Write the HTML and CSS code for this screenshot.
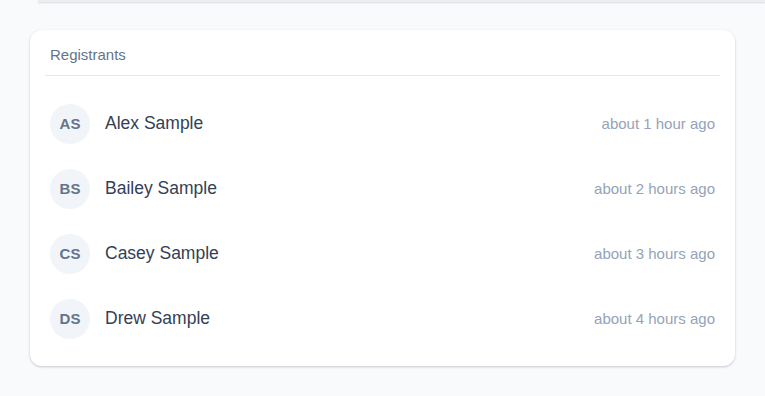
FILE: index.html
```html
<!DOCTYPE html>
<html lang="en">
<head>
<meta charset="utf-8">
<title>Registrants</title>
<link rel="stylesheet" href="styles.css">
</head>
<body>
<div class="top-edge"></div>
<section class="card">
  <header class="card-header">Registrants</header>
  <ul class="list">
    <li class="row">
      <span class="avatar">AS</span>
      <span class="name">Alex Sample</span>
      <span class="time">about 1 hour ago</span>
    </li>
    <li class="row">
      <span class="avatar">BS</span>
      <span class="name">Bailey Sample</span>
      <span class="time">about 2 hours ago</span>
    </li>
    <li class="row">
      <span class="avatar">CS</span>
      <span class="name">Casey Sample</span>
      <span class="time">about 3 hours ago</span>
    </li>
    <li class="row">
      <span class="avatar">DS</span>
      <span class="name">Drew Sample</span>
      <span class="time">about 4 hours ago</span>
    </li>
  </ul>
</section>
</body>
</html>
```
FILE: styles.css
```css
html, body {
  margin: 0;
  padding: 0;
  background: #f8fafc;
  font-family: "Liberation Sans", Arial, sans-serif;
}
body {
  width: 765px;
  height: 396px;
  overflow: hidden;
}
.top-edge {
  margin-left: 38px;
  height: 2px;
  background: #eceef1;
  box-shadow: 0 1px 2px rgba(15, 23, 42, 0.14);
}
.card {
  margin: 28px 0 0 30px;
  width: 705px;
  height: 336px;
  box-sizing: border-box;
  background: #ffffff;
  border-radius: 12px;
  box-shadow: 0 1px 3px rgba(15, 23, 42, 0.16), 0 1px 2px rgba(15, 23, 42, 0.06);
  padding: 0 15px;
}
.card-header {
  padding: 15px 5px 10px;
  font-size: 15px;
  line-height: 20px;
  color: #64748b;
  border-bottom: 1px solid #e2e8f0;
}
.list {
  list-style: none;
  margin: 0;
  padding: 15px 0 0;
}
.row {
  display: flex;
  align-items: center;
  height: 65px;
  padding: 0 5px;
}
.avatar {
  width: 40px;
  height: 40px;
  border-radius: 50%;
  background: #f1f5f9;
  color: #64748b;
  font-weight: 700;
  font-size: 15px;
  display: flex;
  align-items: center;
  justify-content: center;
  flex: none;
}
.name {
  margin-left: 15px;
  font-size: 17.5px;
  color: #334155;
  flex: 1;
}
.time {
  font-size: 15px;
  color: #94a3b8;
}
```
